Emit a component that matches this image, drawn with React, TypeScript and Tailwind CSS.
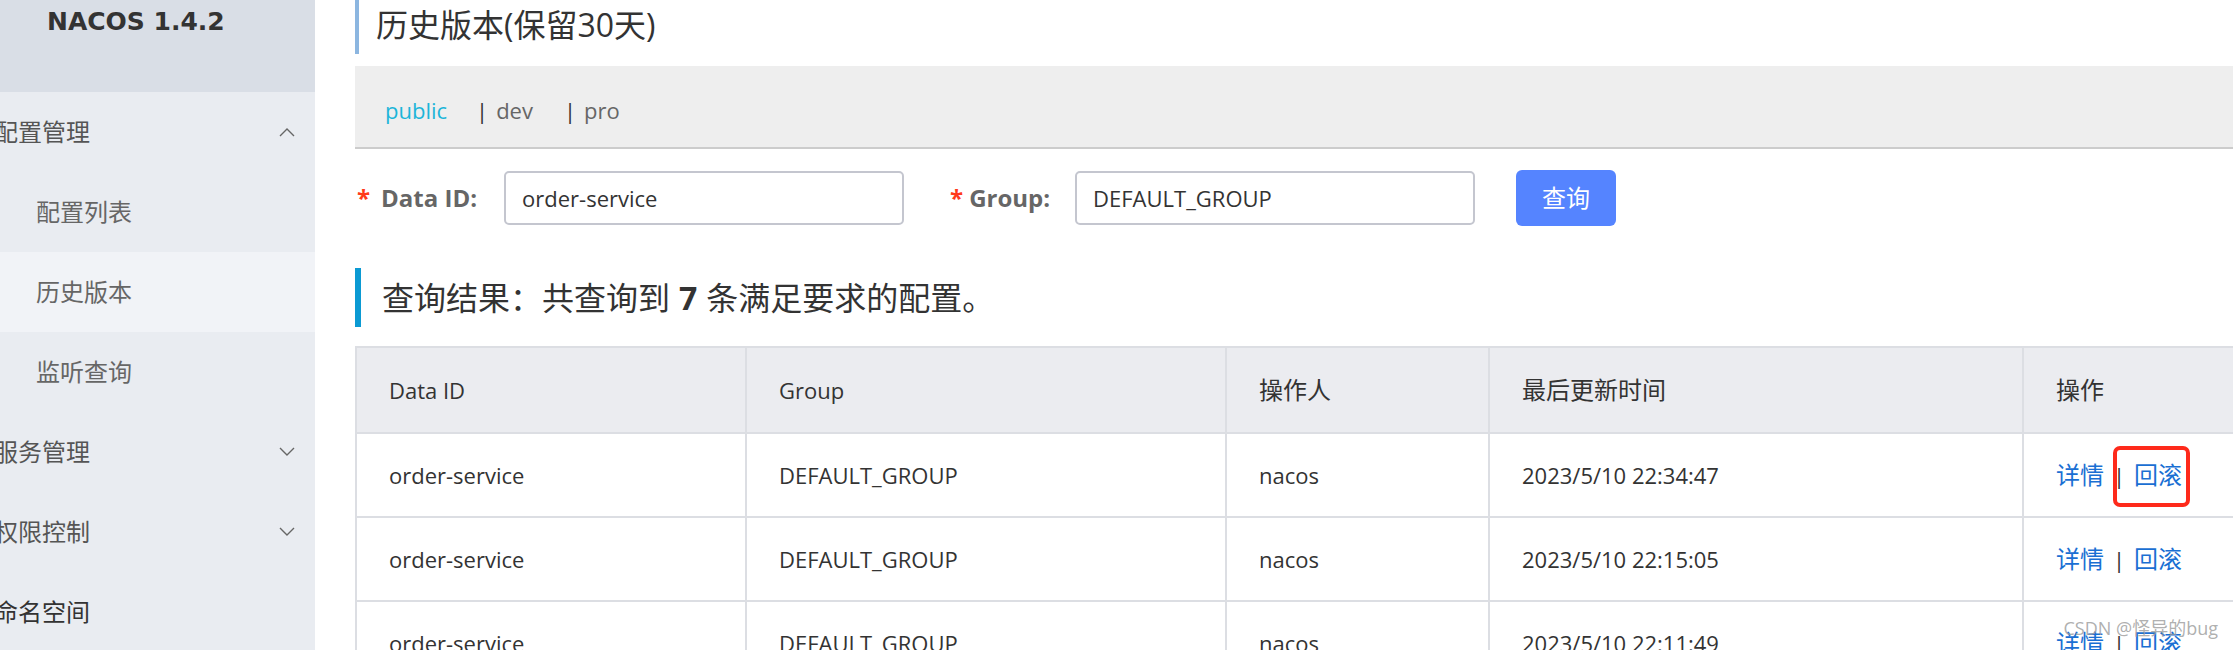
import React from "react";

const rows = [
  { id: "order-service", group: "DEFAULT_GROUP", user: "nacos", time: "2023/5/10 22:34:47", marked: true },
  { id: "order-service", group: "DEFAULT_GROUP", user: "nacos", time: "2023/5/10 22:15:05", marked: false },
  { id: "order-service", group: "DEFAULT_GROUP", user: "nacos", time: "2023/5/10 22:11:49", marked: false },
];

function Chevron({ up }: { up?: boolean }) {
  return (
    <svg width="16" height="10" viewBox="0 0 16 10" fill="none" className="shrink-0">
      <path
        d={up ? "M1 9 L8 2 L15 9" : "M1 1 L8 8 L15 1"}
        stroke="#666"
        strokeWidth="1.4"
      />
    </svg>
  );
}

function Sidebar() {
  return (
    <aside className="w-[315px] shrink-0 bg-[#e9ecf1] text-[24px]">
      {/* logo / version */}
      <div className="h-[92px] bg-[#d9dee6] pl-[47px] pt-[2px]">
        <div className="font-['DejaVu_Sans',sans-serif] text-[25px] font-bold leading-[40px] text-[#333]">
          NACOS 1.4.2
        </div>
      </div>

      <div className="flex h-[80px] items-center justify-between pr-[20px] text-[#555]">
        <span className="-ml-[6px]">配置管理</span>
        <Chevron up />
      </div>
      <div className="flex h-[80px] items-center pl-[36px] text-[#666]">配置列表</div>
      <div className="flex h-[80px] items-center bg-[#f1f3f7] pl-[36px] text-[#666]">历史版本</div>
      <div className="flex h-[80px] items-center pl-[36px] text-[#666]">监听查询</div>
      <div className="flex h-[80px] items-center justify-between pr-[20px] text-[#555]">
        <span className="-ml-[6px]">服务管理</span>
        <Chevron />
      </div>
      <div className="flex h-[80px] items-center justify-between pr-[20px] text-[#555]">
        <span className="-ml-[6px]">权限控制</span>
        <Chevron />
      </div>
      <div className="flex h-[80px] items-center text-[#333]">
        <span className="-ml-[6px]">命名空间</span>
      </div>
    </aside>
  );
}

export default function App() {
  return (
    <div className="relative flex h-[650px] w-[2233px] overflow-hidden bg-white font-['Open_Sans','Noto_Sans_CJK_SC',sans-serif] text-[#333]">
      <Sidebar />

      <main className="ml-[40px] w-[1950px] shrink-0">
        {/* page title */}
        <div className="flex h-[54px] items-center border-l-[4px] border-[#8cb6e0] pl-[17px] pb-[4px] text-[32px] text-[#333]">
          历史版本(保留30天)
        </div>

        {/* namespaces */}
        <div className="mt-[12px] flex h-[83px] items-center border-b-2 border-[#cccccc] bg-[#eeeeee] pl-[30px] pt-[8px] text-[22px]">
          <span className="text-[#1cb5d9]">public</span>
          <span className="ml-[29px] text-[#666]">
            <span className="mr-[8px] text-[#333]">|</span>dev
          </span>
          <span className="ml-[31px] text-[#666]">
            <span className="mr-[8px] text-[#333]">|</span>pro
          </span>
        </div>

        {/* search form */}
        <div className="mt-[22px] flex h-[54px] items-center">
          <span className="ml-[2px] text-[24px] font-bold text-[#ff3a1a]">*</span>
          <span className="ml-[11px] text-[24px] font-bold text-[#666]">Data ID:</span>
          <div className="ml-[27px] flex h-[54px] w-[400px] items-center rounded-[5px] border-2 border-[#c4c6cf] pl-[16px] text-[22px] text-[#333]">
            order-service
          </div>
          <span className="ml-[46px] text-[24px] font-bold text-[#ff3a1a]">*</span>
          <span className="ml-[6px] text-[24px] font-bold text-[#666]">Group:</span>
          <div className="ml-[25px] flex h-[54px] w-[400px] items-center rounded-[5px] border-2 border-[#c4c6cf] pl-[16px] text-[22px] text-[#333]">
            DEFAULT_GROUP
          </div>
          <button className="ml-[41px] flex h-[56px] w-[100px] items-center justify-center rounded-[6px] bg-[#5584ff] text-[24px] text-white">
            查询
          </button>
        </div>

        {/* result heading */}
        <div className="mt-[43px] flex h-[59px] items-center border-l-[6px] border-[#0b9ad3] pl-[21px] text-[32px] text-[#333]">
          查询结果：共查询到 <b className="mx-[9px] font-bold">7</b> 条满足要求的配置。
        </div>

        {/* result table */}
        <table className="mt-[19px] w-[1960px] table-fixed border-collapse text-left text-[22px] text-[#333]">
          <colgroup>
            <col className="w-[390px]" />
            <col className="w-[480px]" />
            <col className="w-[263px]" />
            <col className="w-[534px]" />
            <col className="w-[293px]" />
          </colgroup>
          <thead>
            <tr className="h-[86px] bg-[#ebecf0]">
              <th className="border-2 border-[#dcdee3] pl-[32px] font-normal">Data ID</th>
              <th className="border-2 border-[#dcdee3] pl-[32px] font-normal">Group</th>
              <th className="border-2 border-[#dcdee3] pl-[32px] text-[24px] font-normal">操作人</th>
              <th className="border-2 border-[#dcdee3] pl-[32px] text-[24px] font-normal">最后更新时间</th>
              <th className="border-2 border-[#dcdee3] pl-[32px] text-[24px] font-normal">操作</th>
            </tr>
          </thead>
          <tbody>
            {rows.map((r, i) => (
              <tr key={i} className="h-[84px]">
                <td className="border-2 border-[#dcdee3] pl-[32px]">{r.id}</td>
                <td className="border-2 border-[#dcdee3] pl-[32px]">{r.group}</td>
                <td className="border-2 border-[#dcdee3] pl-[32px]">{r.user}</td>
                <td className="border-2 border-[#dcdee3] pl-[32px]">{r.time}</td>
                <td className="border-2 border-[#dcdee3] pl-[32px] text-[24px] leading-[32px]">
                  <span className="text-[#1a6fd3]">详情</span>
                  <span className="mx-[9px] text-[22px] text-[#333]">|</span>
                  <span className="relative text-[#1a6fd3]">
                    回滚
                    {r.marked && (
                      <span className="absolute -top-[12px] -bottom-[16px] -left-[21px] -right-[8px] rounded-[7px] border-[4px] border-[#fe2a1b]" />
                    )}
                  </span>
                </td>
              </tr>
            ))}
          </tbody>
        </table>
      </main>

      {/* watermark */}
      <div className="absolute right-[15px] bottom-[8px] text-[18px] text-[#9a9a9a]/80">CSDN @怪异的bug</div>
    </div>
  );
}
